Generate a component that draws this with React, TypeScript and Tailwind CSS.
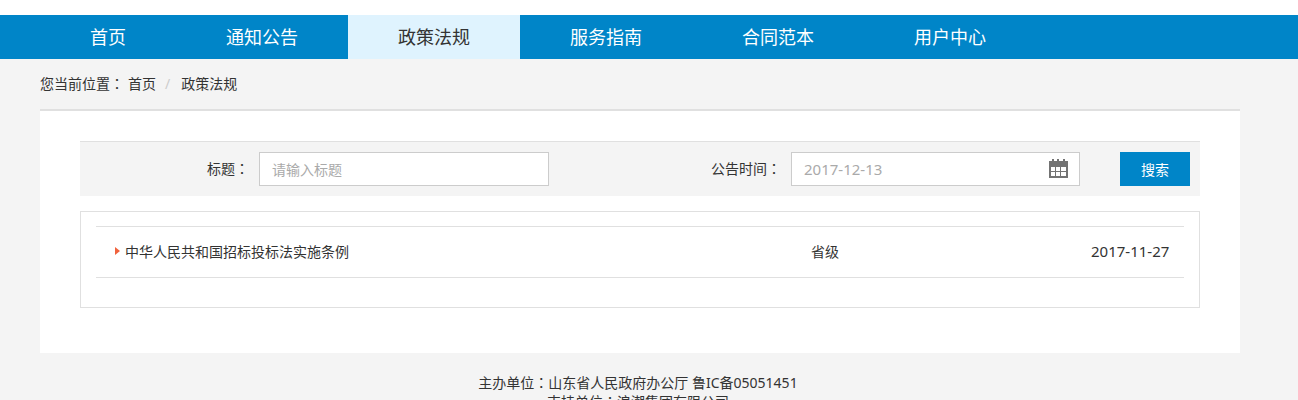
import React from 'react';

const navItems = ['首页', '通知公告', '政策法规', '服务指南', '合同范本', '用户中心'];
const font = "font-['Noto_Sans','Noto_Sans_CJK_SC',sans-serif]";

// TC face has the colon centred in its cell, as in the screenshot
function Colon() {
    return <span className="font-['Noto_Sans_CJK_TC',sans-serif]">：</span>;
}

function CalendarIcon() {
    return (
        <svg width="20" height="20" viewBox="0 0 20 20" fill="#737373">
            <rect x="3" y="0" width="2" height="3" />
            <rect x="8" y="0" width="2" height="3" />
            <rect x="14" y="0" width="2" height="3" />
            <path fillRule="evenodd" d="M0 2h19v17H0z M2 8v4h4V8z M7 8v4h4V8z M12 8v4h5V8z M2 13v4h4v-4z M7 13v4h4v-4z M12 13v4h5v-4z" />
        </svg>
    );
}

export default function App() {
    return (
        <div className={`${font} h-[400px] w-[1298px] overflow-hidden bg-[#f4f4f4] text-[#333]`}>
            <div className="h-[15px] bg-white" />
            <nav className="h-[44px] bg-[#0085c8]">
                <ul className="ml-10 flex h-full">
                    {navItems.map((item) => (
                        <li
                            key={item}
                            className={`flex items-center px-[50px] text-[18px] ${item === '政策法规' ? 'bg-[#dff3fe] text-[#333]' : 'text-white'}`}
                        >
                            {item}
                        </li>
                    ))}
                </ul>
            </nav>

            <main className="ml-10 w-[1200px]">
                <div className="flex h-[50px] items-center pb-[2px] text-[14px]">
                    <span>您当前位置<Colon /></span>
                    <span className="ml-1">首页</span>
                    <span className="ml-[9px] mr-[11px] text-[#ccc]">/</span>
                    <span>政策法规</span>
                </div>

                <section className="h-[244px] border-t-2 border-[#e0e0e0] bg-white px-10 pt-[30px]">
                    <div className="flex h-[55px] items-center border-t border-[#e0e0e0] bg-[#f4f4f4] text-[14px]">
                        <label className="ml-[127px] w-[52px] pb-[2px]">标题<Colon /></label>
                        <div className="flex h-[34px] w-[290px] items-center border border-[#ccc] bg-white pl-3 text-[#aaa]">
                            请输入标题
                        </div>
                        <label className="ml-[162px] w-[80px] pb-[2px]">公告时间<Colon /></label>
                        <div className="flex h-[34px] w-[289px] items-center justify-between border border-[#ccc] bg-white pl-3 pr-[10px] text-[15px] text-[#aaa]">
                            <span>2017-12-13</span>
                            <CalendarIcon />
                        </div>
                        <button className="ml-10 h-[34px] w-[70px] bg-[#0085c8] text-white">搜索</button>
                    </div>

                    <div className="mt-[15px] h-[97px] border border-[#e0e0e0] px-[15px] pt-[14px]">
                        <div className="flex h-[52px] items-center border-y border-[#e0e0e0] pb-[2px] pl-[19px] text-[14px]">
                            <span className="h-0 w-0 border-y-[4px] border-l-[5px] border-y-transparent border-l-[#f0623c]" />
                            <span className="ml-[5px] w-[686px]">中华人民共和国招标投标法实施条例</span>
                            <span className="w-[280px]">省级</span>
                            <span className="text-[15px]">2017-11-27</span>
                        </div>
                    </div>
                </section>

                <footer className="pr-1 pt-5 text-center text-[14px] leading-[18px]">
                    <p>主办单位<Colon />山东省人民政府办公厅 鲁IC备05051451</p>
                    <p>支持单位<Colon />浪潮集团有限公司</p>
                </footer>
            </main>
        </div>
    );
}
